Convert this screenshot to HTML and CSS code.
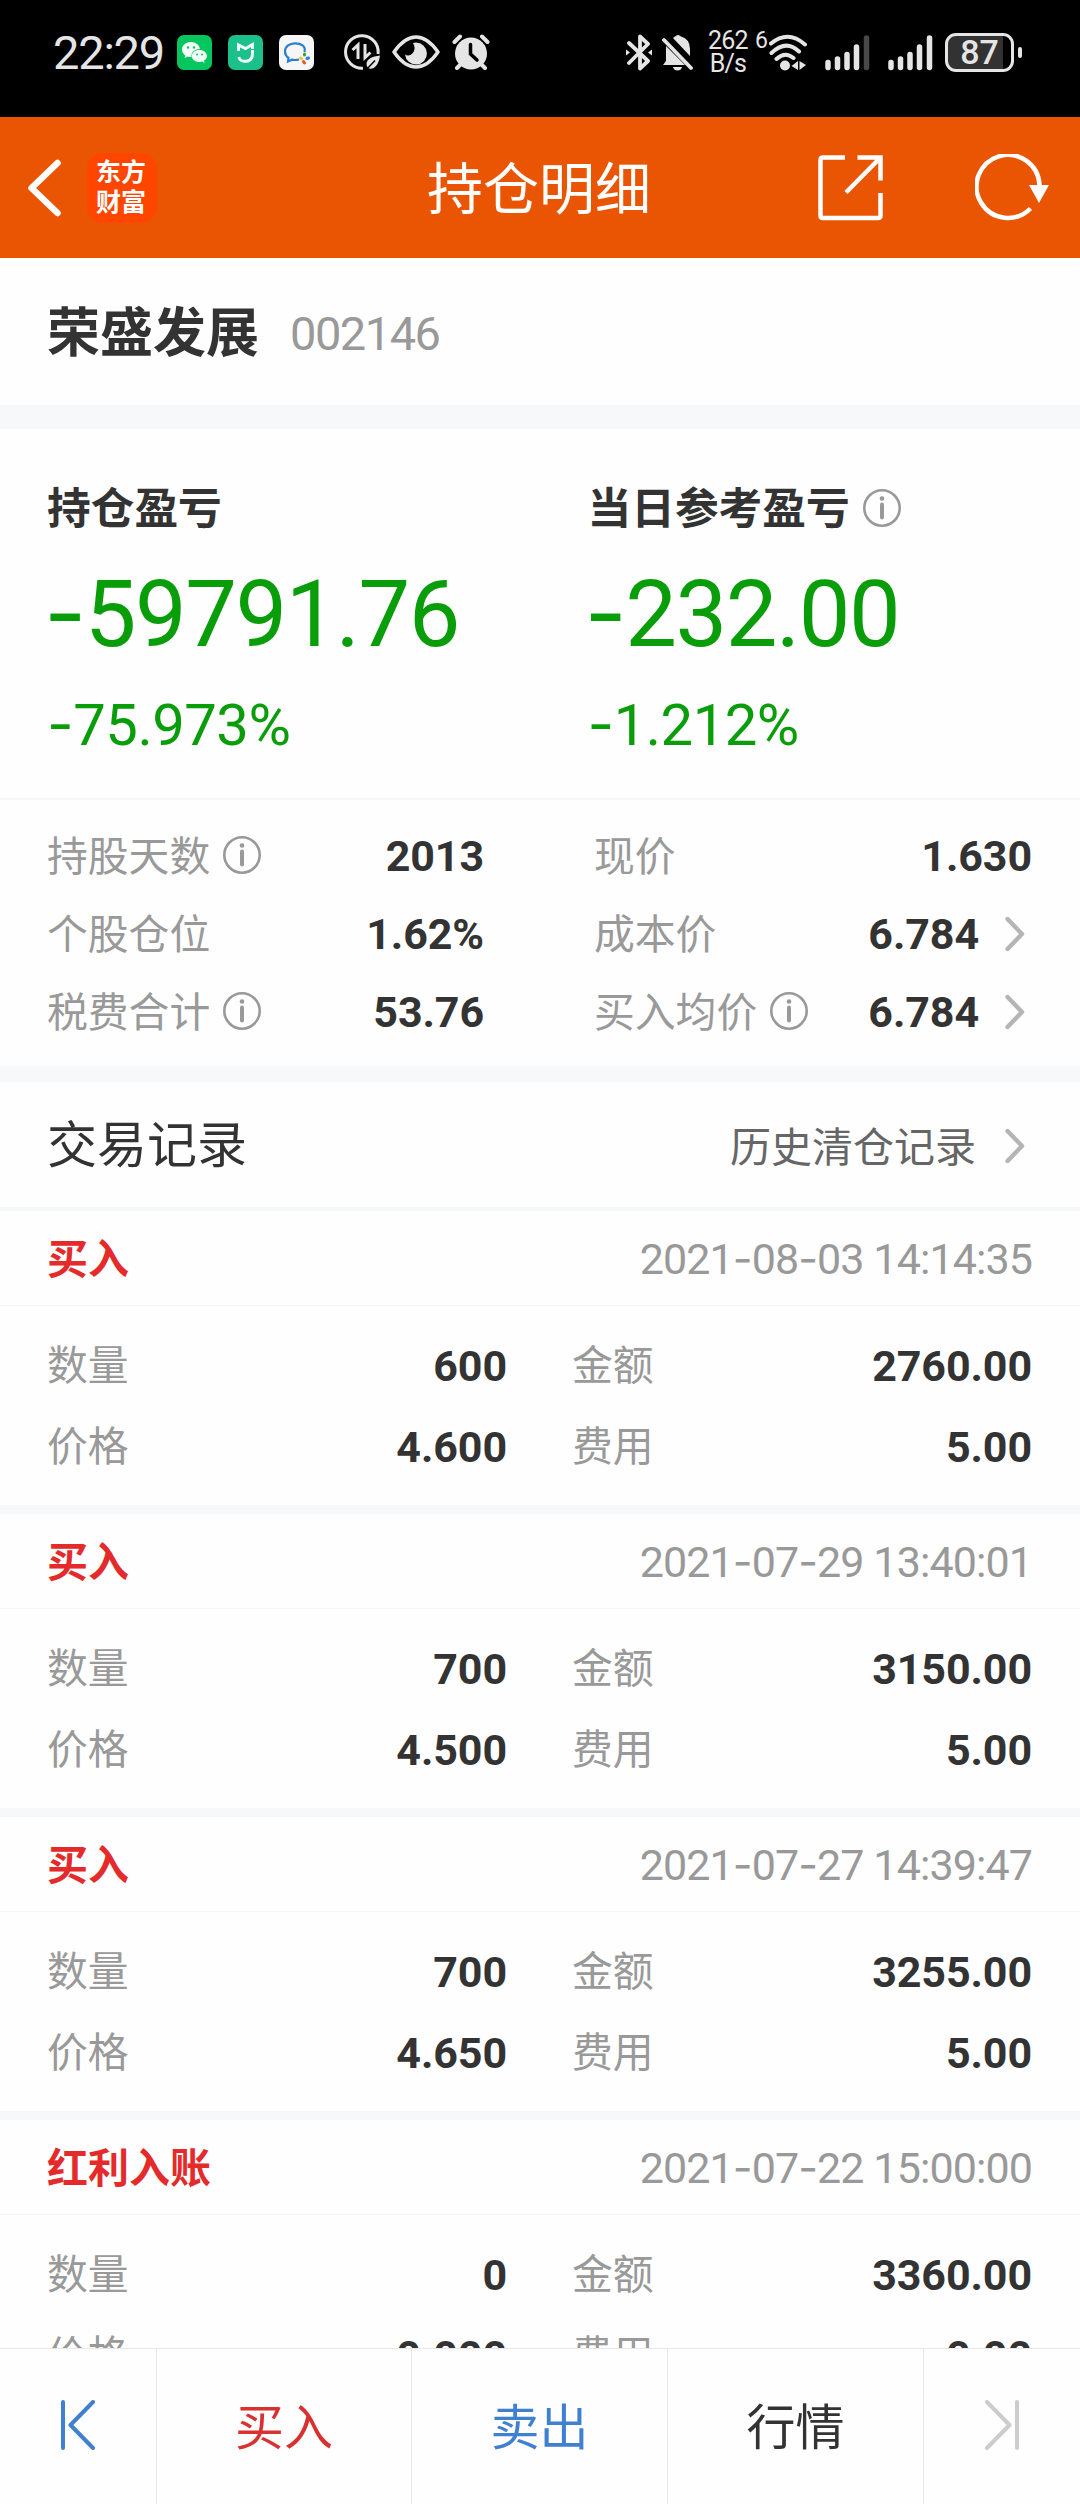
FILE: index.html
```html
<!DOCTYPE html>
<html lang="zh-CN">
<head>
    <meta charset="UTF-8">
    <meta name="viewport" content="width=device-width, initial-scale=1.0">
    <title>持仓明细</title>
    <link rel="stylesheet" href="styles.css">
</head>
<body>
    <!-- shared icons -->
    <svg class="defs" width="0" height="0">
        <symbol id="info" viewBox="0 0 38 38">
            <circle cx="19" cy="19" r="17.7" fill="none" stroke="#999" stroke-width="2.6"/>
            <circle cx="19" cy="9.5" r="2.3" fill="#999"/>
            <path d="M19 15.5V28.5" stroke="#999" stroke-width="4" stroke-linecap="round"/>
        </symbol>
        <symbol id="arrow" viewBox="0 0 20 36">
            <path d="M2.5 3L17 18L2.5 33" fill="none" stroke="#b5b5b5" stroke-width="4.4" stroke-linecap="round" stroke-linejoin="round"/>
        </symbol>
    </svg>

    <div class="status">
        <div class="status-left">
            <span class="time">22:29</span>
            <svg class="app" width="35" height="35" viewBox="0 0 35 35">
                <rect width="35" height="35" rx="7" fill="#06c75e"/>
                <path d="M14 7C9 7 5 10.200 5 14.500C5 17 6.300 19 8.300 20.400L7.500 23L10.800 21.400C12 21.800 13 21.900 14.500 21.900C14 17 18 14 23 14C22.500 10 18.600 7 14 7Z" fill="#f4fff8"/>
                <path d="M22.500 15C18 15 14.800 17.700 14.800 21C14.800 24.400 18 27 22.500 27L25 26.600L27.500 28L27 25.600C28.800 24.500 30 22.900 30 21C30 17.700 26.700 15 22.500 15Z" fill="#f4fff8"/>
                <g fill="#06c75e"><circle cx="11" cy="12.500" r="1.200"/><circle cx="17" cy="12.500" r="1.200"/><circle cx="20" cy="19.500" r="1"/><circle cx="25" cy="19.500" r="1"/></g>
            </svg>
            <svg class="app" width="35" height="35" viewBox="0 0 35 35">
                <rect width="35" height="35" rx="7" fill="#1cc08a"/>
                <path d="M10.500 16V10L17.500 13.500L24.500 9.500V14" fill="none" stroke="#f0fff9" stroke-width="3"/>
                <path d="M24.500 15V19C24.500 28.500 12 28 10.800 22" fill="none" stroke="#f0fff9" stroke-width="3"/>
            </svg>
            <svg class="app" width="35" height="35" viewBox="0 0 35 35">
                <rect width="35" height="35" rx="7" fill="#f6f6f6"/>
                <path d="M25.500 17C27 11 22 8.300 16 8.300C10 8.300 6 12 6 16.500C6 19.500 7.500 21.500 9.500 23L9 26.500L13 24.700C15.500 25.200 17 25.200 20 24.500" fill="none" stroke="#2b7fd0" stroke-width="2.200"/>
                <g stroke-width="3" stroke-linecap="round">
                    <path d="M25.500 19V20" stroke="#3ca03c"/><path d="M28 23.500L29.500 23" stroke="#2f7fe0"/><path d="M24.500 26.500L25.500 28" stroke="#e8582c"/><path d="M21.500 23L22.500 23.500" stroke="#f2c230"/>
                </g>
            </svg>
            <svg class="saver" width="36" height="36" viewBox="0 0 36 36" fill="none" stroke="#e5e5e5">
                <path d="M34 20A16.300 16.300 0 1 0 19 34.200" stroke-width="3"/>
                <path d="M8.500 16L14 11V25M21 10V23.500L26.500 18.500" stroke-width="3"/>
                <path d="M36 21.500C28 22.500 22.500 25 22.500 30C22.500 34 26 36 29.500 34C33 32 35 28 36 21.500Z" fill="#e5e5e5" stroke="none"/>
                <path d="M22 36L31 26.500" stroke="#000" stroke-width="1.500"/>
            </svg>
            <svg class="eye" width="48" height="34" viewBox="0 0 48 34">
                <path d="M2 17C9 7 16 2 24 2C32 2 39 7 46 17C39 27 32 32 24 32C16 32 9 27 2 17Z" fill="none" stroke="#e5e5e5" stroke-width="3.500" stroke-linejoin="round"/>
                <path d="M24 7.500A11 11 0 1 1 13 19.500C18 23 26 16 21 8Z" fill="#e5e5e5"/>
            </svg>
            <svg class="alarm" width="38" height="36" viewBox="0 0 38 36">
                <circle cx="19" cy="19.500" r="16" fill="#e5e5e5"/>
                <path d="M2.500 8L8 2.500M35.500 8L30 2.500M9 30L5 34M29 30L33 34" stroke="#e5e5e5" stroke-width="4" stroke-linecap="round"/>
                <path d="M18.500 10.500V20L25 26" fill="none" stroke="#000" stroke-width="3.500" stroke-linecap="round"/>
            </svg>
        </div>
        <div class="status-right">
            <svg class="bt" width="26" height="37" viewBox="0 0 26 37" fill="none" stroke="#e5e5e5" stroke-width="3.800" stroke-linejoin="round" stroke-linecap="round">
                <path d="M3 9L22 27L14 34.500V2.500L22 10L3 29"/>
                <path d="M0 15.500V21.500L4 18.500ZM26 15.500V21.500L22 18.500Z" fill="#e5e5e5" stroke="none"/>
            </svg>
            <svg class="mute" width="31" height="37" viewBox="0 0 31 37">
                <path d="M4 12L23 31H1L4 27Z" fill="#e5e5e5"/>
                <path d="M11 4L13 2.500Q16-.500 19 2.500Q28 5 28 15V22Z" fill="#e5e5e5"/>
                <path d="M11 33H20Q19 36.500 15.500 36.500T11 33Z" fill="#e5e5e5"/>
                <path d="M2 6L29 34" stroke="#e5e5e5" stroke-width="3.800" stroke-linecap="round"/>
            </svg>
            <div class="speed"><span>262</span><span>B/s</span></div>
            <span class="six">6</span>
            <svg class="wifi" width="38" height="37" viewBox="0 0 38 37" fill="none" stroke="#e5e5e5" stroke-width="4" stroke-linecap="round">
                <path d="M2 9.500Q19-4.500 36 10.500M2.500 19Q17 5 30 17.500M7.500 25Q16 17 24.500 24"/>
                <circle cx="16" cy="31.500" r="5" fill="#e5e5e5" stroke="none"/>
                <path d="M22.500 32L29 27V36ZM30.500 27L37 31L30.500 36Z" fill="#e5e5e5" stroke="none"/>
            </svg>
            <svg class="signal" width="45" height="37" viewBox="0 0 45 37" stroke="#e5e5e5" stroke-width="5.500" stroke-linecap="round">
                <path d="M3 28.500V33.500M12.500 25V33.500M22 20.500V33.500M31.500 13V33.500"/>
                <path d="M41.500 4V33.500" stroke="#484848"/>
            </svg>
            <svg class="signal" width="45" height="37" viewBox="0 0 45 37" stroke="#e5e5e5" stroke-width="5.500" stroke-linecap="round">
                <path d="M3 28.500V33.500M12.500 25V33.500M22 20.500V33.500M31.500 13V33.500M41.500 4V33.500"/>
            </svg>
            <div class="battery"><span>87</span></div>
        </div>
    </div>

    <header class="header">
        <div class="header-left">
            <svg width="34" height="58" viewBox="0 0 34 58"><path d="M29.500 4L3.500 29L29.500 54" fill="none" stroke="#fff" stroke-width="6.500" stroke-linecap="round" stroke-linejoin="round"/></svg>
            <div class="logo">东方<br>财富</div>
        </div>
        <h1>持仓明细</h1>
        <div class="header-right">
            <svg width="66" height="66" viewBox="0 0 66 66" fill="none" stroke="#fff" stroke-width="4.500">
                <path d="M27 2.500H5Q2.500 2.500 2.500 5V60.500Q2.500 63 5 63H60Q62.500 63 62.500 60.500V38"/>
                <path d="M39.500 2.500H62.500V25.500M62 3L28 37.500"/>
            </svg>
            <svg width="74" height="68" viewBox="0 0 74 68">
                <path d="M64.500 31A31.500 31.500 0 1 0 55.500 54.500" fill="none" stroke="#fff" stroke-width="4.500"/>
                <path d="M54 31H74L64 49Z" fill="#fff"/>
            </svg>
        </div>
    </header>

    <main>
        <section class="stock">
            <h2>荣盛发展</h2>
            <span class="code">002146</span>
        </section>

        <section class="profit">
            <div>
                <h3>持仓盈亏</h3>
                <p class="amount"><span class="dash">-</span>59791.76</p>
                <p class="percent"><span class="dash">-</span>75.973%</p>
            </div>
            <div>
                <h3>当日参考盈亏<svg class="info"><use href="#info"/></svg></h3>
                <p class="amount"><span class="dash">-</span>232.00</p>
                <p class="percent"><span class="dash">-</span>1.212%</p>
            </div>
        </section>

        <section class="detail">
            <div class="item"><span>持股天数</span><svg class="info"><use href="#info"/></svg><b>2013</b></div>
            <div class="item"><span>现价</span><b>1.630</b></div>
            <div class="item"><span>个股仓位</span><b>1.62%</b></div>
            <div class="item"><span>成本价</span><b>6.784</b><svg class="arrow"><use href="#arrow"/></svg></div>
            <div class="item"><span>税费合计</span><svg class="info"><use href="#info"/></svg><b>53.76</b></div>
            <div class="item"><span>买入均价</span><svg class="info"><use href="#info"/></svg><b>6.784</b><svg class="arrow"><use href="#arrow"/></svg></div>
        </section>

        <section class="trade-title">
            <h4>交易记录</h4>
            <a><span>历史清仓记录</span><svg class="arrow"><use href="#arrow"/></svg></a>
        </section>

        <section class="record">
            <div class="record-head"><strong>买入</strong><time>2021<span class="dash">-</span>08<span class="dash">-</span>03 14:14:35</time></div>
            <div class="record-body">
                <div class="item"><span>数量</span><b>600</b></div>
                <div class="item"><span>金额</span><b>2760.00</b></div>
                <div class="item"><span>价格</span><b>4.600</b></div>
                <div class="item"><span>费用</span><b>5.00</b></div>
            </div>
        </section>
        <section class="record">
            <div class="record-head"><strong>买入</strong><time>2021<span class="dash">-</span>07<span class="dash">-</span>29 13:40:01</time></div>
            <div class="record-body">
                <div class="item"><span>数量</span><b>700</b></div>
                <div class="item"><span>金额</span><b>3150.00</b></div>
                <div class="item"><span>价格</span><b>4.500</b></div>
                <div class="item"><span>费用</span><b>5.00</b></div>
            </div>
        </section>
        <section class="record">
            <div class="record-head"><strong>买入</strong><time>2021<span class="dash">-</span>07<span class="dash">-</span>27 14:39:47</time></div>
            <div class="record-body">
                <div class="item"><span>数量</span><b>700</b></div>
                <div class="item"><span>金额</span><b>3255.00</b></div>
                <div class="item"><span>价格</span><b>4.650</b></div>
                <div class="item"><span>费用</span><b>5.00</b></div>
            </div>
        </section>
        <section class="record">
            <div class="record-head"><strong>红利入账</strong><time>2021<span class="dash">-</span>07<span class="dash">-</span>22 15:00:00</time></div>
            <div class="record-body">
                <div class="item"><span>数量</span><b>0</b></div>
                <div class="item"><span>金额</span><b>3360.00</b></div>
                <div class="item"><span>价格</span><b>0.000</b></div>
                <div class="item"><span>费用</span><b>0.00</b></div>
            </div>
        </section>
    </main>

    <nav class="toolbar">
        <a class="step"><svg width="36" height="50" viewBox="0 0 36 50" fill="none" stroke="#3f80d0" stroke-width="4" stroke-linecap="round" stroke-linejoin="round"><path d="M3 2V48M33 2L10.500 25L33 48"/></svg></a>
        <a class="buy">买入</a>
        <a class="sell">卖出</a>
        <a>行情</a>
        <a class="step"><svg width="36" height="50" viewBox="0 0 36 50" fill="none" stroke="#ccc" stroke-width="4" stroke-linecap="round" stroke-linejoin="round"><path d="M33 2V48M3 2L25.500 25L3 48"/></svg></a>
    </nav>
</body>
</html>
```
FILE: styles.css
```css
* {
    box-sizing: border-box;
    margin: 0;
    padding: 0;
}
body {
    display: flex;
    flex-direction: column;
    width: 1080px;
    height: 2504px;
    overflow: hidden;
    background-color: #fefefe;
    color: #333;
    font-family: Roboto, "Noto Sans CJK SC", sans-serif;
}
svg {
    display: block;
    flex: none;
}
.defs {
    position: absolute;
}
.dash {
    font-family: Inter, sans-serif;
}

/* status bar */
.status {
    display: flex;
    justify-content: space-between;
    height: 117px;
    padding: 0 58px 13px 53px;
    background-color: #000;
    color: #e5e5e5;
    flex: none;
}
.status-left, .status-right {
    display: flex;
    align-items: center;
}
.time {
    width: 108px;
    font-size: 47px;
    letter-spacing: -1.2px;
}
.app {
    margin-left: 16px;
}
.saver {
    margin-left: 30px;
}
.eye {
    margin-left: 12px;
}
.alarm {
    margin-left: 12px;
}
.bt {
    margin-right: 10px;
}
.mute {
    margin-right: 15px;
}
.speed {
    display: flex;
    flex-direction: column;
    width: 40px;
    margin-right: 7px;
    font-size: 25px;
    line-height: 23px;
    letter-spacing: -0.8px;
    text-align: center;
}
.six {
    width: 13px;
    margin: 0 1px 22px 0;
    font-size: 23px;
    line-height: 20px;
}
.wifi {
    margin-right: 18px;
}
.signal {
    margin-right: 18px;
}
.signal + .battery {
    margin-left: -6px;
}
.battery {
    position: relative;
    display: flex;
    align-items: center;
    justify-content: center;
    width: 69px;
    height: 39px;
    margin-right: 8px;
    border: 3px solid #e5e5e5;
    border-radius: 11px;
    background: linear-gradient(to right, #323232 87%, #000 87%);
    font-size: 34px;
    font-weight: 500;
}
.battery::after {
    content: "";
    position: absolute;
    right: -11px;
    top: 11px;
    width: 4px;
    height: 11px;
    border-radius: 2px;
    background-color: #e5e5e5;
}

/* header */
.header {
    display: grid;
    grid-template-columns: 1fr auto 1fr;
    align-items: center;
    height: 141px;
    padding: 0 31px 0 28px;
    background-color: #ea5504;
    color: #fff;
    flex: none;
}
.header h1 {
    padding: 4px 0 0 1px;
    font-size: 56px;
    font-weight: 400;
    line-height: 80px;
}
.header-left, .header-right {
    display: flex;
    align-items: center;
}
.header-right {
    justify-content: flex-end;
    gap: 91px;
}
.logo {
    width: 70px;
    height: 70px;
    margin-left: 25px;
    padding: 5px 2px 0 0;
    border-radius: 16px;
    background-color: #ff4600;
    font-size: 25px;
    font-weight: 700;
    line-height: 30px;
    text-align: center;
}

main {
    flex: 1;
    min-height: 0;
    overflow: hidden;
}
.stock {
    display: flex;
    align-items: center;
    height: 171px;
    padding: 4px 47px 0;
    border-bottom: 24px solid #f6f8fa;
}
.stock h2 {
    font-size: 53px;
    line-height: 80px;
}
.code {
    margin-left: 31px;
    color: #999;
    font-size: 47px;
    letter-spacing: -1.5px;
}

/* profit and loss */
.profit {
    display: grid;
    grid-template-columns: 1fr 1fr;
    height: 371px;
    padding: 47px 0 0 47px;
    border-bottom: 2px solid #f7f7f8;
}
.profit > div + div {
    padding-left: 24px;
}
.profit h3 {
    display: flex;
    align-items: center;
    font-size: 43.7px;
    line-height: 66px;
}
.info {
    width: 38px;
    height: 38px;
    margin: 0 0 2px 13px;
}
.amount, .percent {
    color: #0a9d0a;
}
.amount {
    margin: 19px 0 0 -3px;
    font-size: 92px;
    line-height: 104px;
    letter-spacing: -1.5px;
}
.percent {
    margin-top: 19px;
    font-size: 58px;
    line-height: 76px;
    letter-spacing: -0.5px;
}

.item {
    display: flex;
    align-items: center;
    color: #999;
    font-size: 40.8px;
    line-height: 60px;
}
.item > span {
    padding-top: 1px;
}
.item b {
    margin-left: auto;
    color: #333;
    font-size: 43px;
    letter-spacing: -0.1px;
}
.arrow {
    width: 20px;
    height: 36px;
    margin: 0 7px 0 26px;
}

/* holding detail */
.detail {
    display: grid;
    grid-template-columns: 437px 438px;
    grid-auto-rows: 78px;
    justify-content: space-between;
    height: 282px;
    padding: 17px 48px 0 47px;
    border-bottom: 16px solid #f6f8fa;
}

/* trade records */
.trade-title {
    display: flex;
    align-items: center;
    justify-content: space-between;
    height: 129px;
    padding: 3px 48px 0 47px;
    border-bottom: 4px solid #f6f8f9;
}
.trade-title h4 {
    font-size: 50px;
    font-weight: 400;
    line-height: 70px;
}
.trade-title a {
    display: flex;
    align-items: center;
    color: #666;
    font-size: 41px;
    line-height: 60px;
}
.trade-title a span {
    padding-top: 3px;
}
.trade-title .arrow {
    margin-left: 29px;
}
.record {
    height: 303px;
    border-bottom: 9px solid #f6f8fa;
}
.record-head {
    display: flex;
    align-items: center;
    justify-content: space-between;
    height: 95px;
    padding: 0 48px 0 47px;
    border-bottom: 1px solid #f4f5f6;
    line-height: 60px;
}
.record-head strong {
    padding-top: 3px;
    color: #e42a2a;
    font-size: 41px;
}
.record-head time {
    color: #999;
    font-size: 43px;
    letter-spacing: -0.9px;
}
.record-body {
    display: grid;
    grid-template-columns: 460px 460px;
    grid-auto-rows: 81px;
    justify-content: space-between;
    padding: 19px 48px 0 47px;
}

/* bottom toolbar */
.toolbar {
    display: grid;
    grid-template-columns: 157px 255px 256px 256px 156px;
    height: 156px;
    border-top: 1px solid #e8e8e8;
    background-color: #fefefe;
    flex: none;
}
.toolbar a {
    display: flex;
    align-items: center;
    justify-content: center;
    padding-top: 4px;
    border-right: 1px solid #e8e8e8;
    font-size: 49px;
    line-height: 70px;
}
.toolbar .step {
    padding: 0 0 3px;
}
.toolbar a:last-child {
    border-right: none;
}
.toolbar .buy {
    color: #d93030;
}
.toolbar .sell {
    color: #3f80d0;
}
```
